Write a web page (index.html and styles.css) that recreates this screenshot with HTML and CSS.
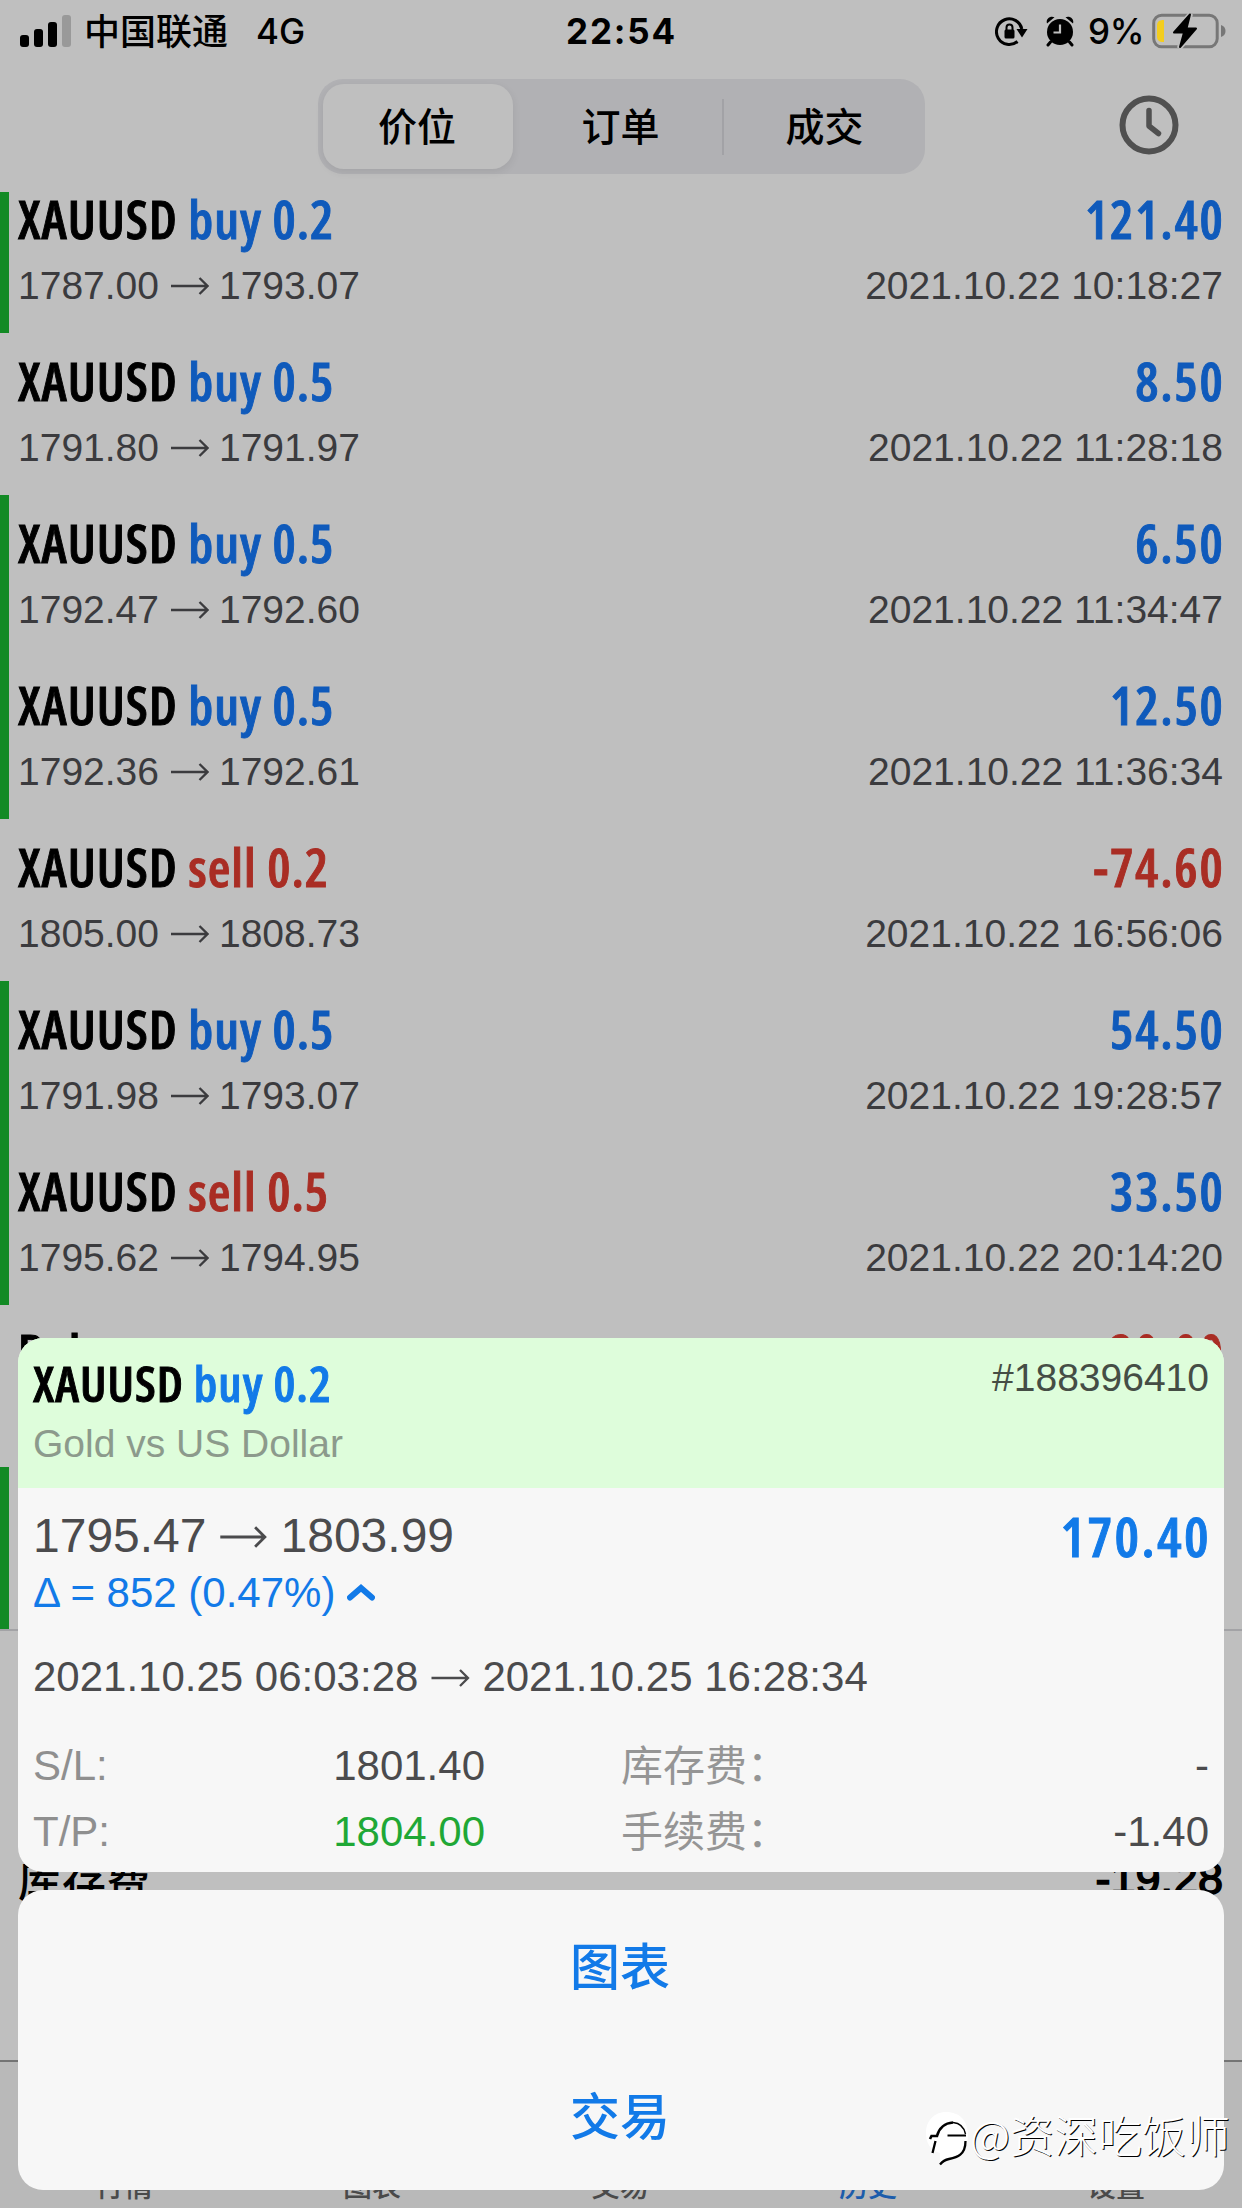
FILE: index.html
```html
<!DOCTYPE html>
<html lang="zh-CN">
<head>
<meta charset="utf-8">
<title>历史</title>
<link rel="stylesheet" href="styles.css">
</head>
<body>
<svg class="defs" width="0" height="0" aria-hidden="true">
  <symbol id="arrow" viewBox="0 0 38 18"><path d="M0 9H36.5M28.5 1L36.5 9L28.5 17" fill="none" stroke="currentColor" stroke-width="2.3"/></symbol>
</svg>
<div class="screen">
  <header class="status">
    <div class="status-left">
      <svg class="signal" width="51" height="32" viewBox="0 0 51 32"><rect x="0" y="20" width="9" height="12" rx="3"/><rect x="14" y="14" width="9" height="18" rx="3"/><rect x="28" y="7" width="9" height="25" rx="3"/><rect x="42" y="0" width="9" height="32" rx="3" fill="#999"/></svg>
      <span class="carrier">中国联通</span>
      <span class="network">4G</span>
    </div>
    <time class="clock">22:54</time>
    <div class="status-right">
      <svg class="lock" width="33" height="31" viewBox="0 0 33 31"><path d="M22.5 25.5A12.8 12.8 0 1 1 26.8 13" fill="none" stroke="#000" stroke-width="3"/><path d="M21.5 13H32.5L27 21.5Z"/><rect x="9.5" y="13.5" width="10" height="9" rx="1.5"/><path d="M11.5 14V11.5a3 3 0 0 1 6 0V14" fill="none" stroke="#000" stroke-width="2"/></svg>
      <svg class="alarm" width="28" height="31" viewBox="0 0 28 31"><circle cx="14" cy="16" r="13"/><path d="M1 7.5C-.5 3 4 -.8 8.5 1.2ZM27 7.5C28.5 3 24 -.8 19.5 1.2Z"/><path d="M4.5 26L2 29M23.5 26L26 29" stroke="#000" stroke-width="3" stroke-linecap="round"/><path d="M14 8.5V16.5H7.5" fill="none" stroke="#bfbfbf" stroke-width="2.2"/></svg>
      <span class="percent">9%</span>
      <svg class="battery" width="74" height="36" viewBox="0 0 74 36"><rect x="1.7" y="2.2" width="63.5" height="31.6" rx="8" fill="none" stroke="#777" stroke-width="3"/><path d="M69 12C75 13.5 75 22.5 69 24Z" fill="#777"/><path d="M12 7V29C6.5 29 5 27 5 23V13C5 9 6.5 7 12 7Z" fill="#f3cd1e"/><path d="M38.5 1L21.5 20H31L27.5 35L44.5 15H35Z" stroke="#bfbfbf" stroke-width="5" fill="none"/><path d="M38 1.5L22 19.5H32L28 34L44 15.5H34.5Z" stroke="#000" stroke-width="2" stroke-linejoin="round"/></svg>
    </div>
  </header>
  <nav class="toolbar">
    <div class="segmented">
      <span class="segment selected">价位</span>
      <span class="segment orders">订单</span>
      <i class="divider"></i>
      <span class="segment trades">成交</span>
    </div>
    <svg class="period" width="60" height="60" viewBox="0 0 60 60" fill="none" stroke="#505050" stroke-linecap="round" stroke-linejoin="round"><circle cx="30" cy="30" r="26.5" stroke-width="6"/><path d="M30 15.5V31L39.5 38.5" stroke-width="5.5"/></svg>
  </nav>
  <main class="history">
    <div class="deal closed-tp"><div class="line"><b class="name">XAUUSD <em class="buy">buy 0.2</em></b><b class="profit buy">121.40</b></div><div class="line sub"><span>1787.00<svg class="arrow"><use href="#arrow"/></svg>1793.07</span><span>2021.10.22 10:18:27</span></div></div>
    <div class="deal"><div class="line"><b class="name">XAUUSD <em class="buy">buy 0.5</em></b><b class="profit buy">8.50</b></div><div class="line sub"><span>1791.80<svg class="arrow"><use href="#arrow"/></svg>1791.97</span><span>2021.10.22 11:28:18</span></div></div>
    <div class="deal closed-tp"><div class="line"><b class="name">XAUUSD <em class="buy">buy 0.5</em></b><b class="profit buy">6.50</b></div><div class="line sub"><span>1792.47<svg class="arrow"><use href="#arrow"/></svg>1792.60</span><span>2021.10.22 11:34:47</span></div></div>
    <div class="deal closed-tp"><div class="line"><b class="name">XAUUSD <em class="buy">buy 0.5</em></b><b class="profit buy">12.50</b></div><div class="line sub"><span>1792.36<svg class="arrow"><use href="#arrow"/></svg>1792.61</span><span>2021.10.22 11:36:34</span></div></div>
    <div class="deal"><div class="line"><b class="name">XAUUSD <em class="sell">sell 0.2</em></b><b class="profit sell">-74.60</b></div><div class="line sub"><span>1805.00<svg class="arrow"><use href="#arrow"/></svg>1808.73</span><span>2021.10.22 16:56:06</span></div></div>
    <div class="deal closed-tp"><div class="line"><b class="name">XAUUSD <em class="buy">buy 0.5</em></b><b class="profit buy">54.50</b></div><div class="line sub"><span>1791.98<svg class="arrow"><use href="#arrow"/></svg>1793.07</span><span>2021.10.22 19:28:57</span></div></div>
    <div class="deal closed-tp"><div class="line"><b class="name">XAUUSD <em class="sell">sell 0.5</em></b><b class="profit buy">33.50</b></div><div class="line sub"><span>1795.62<svg class="arrow"><use href="#arrow"/></svg>1794.95</span><span>2021.10.22 20:14:20</span></div></div>
    <div class="deal"><div class="line"><b class="name">Balance</b><b class="profit sell">-20.00</b></div></div>
    <div class="deal closed-tp"></div>
    <div class="summary"><span>库存费</span><span>-19.28</span></div>
  </main>
  <footer class="tabs"><span>行情</span><span>图表</span><span>交易</span><span class="active">历史</span><span>设置</span></footer>
</div>

<div class="sheet">
  <section class="card">
    <div class="card-head">
      <div class="head-left"><b class="name">XAUUSD <em>buy 0.2</em></b><span class="desc">Gold vs US Dollar</span></div>
      <span class="ticket">#188396410</span>
    </div>
    <div class="card-body">
      <div class="line prices"><span>1795.47<svg class="arrow"><use href="#arrow"/></svg>1803.99</span><b>170.40</b></div>
      <div class="delta">Δ = 852 (0.47%)<svg width="28" height="17" viewBox="0 0 28 17"><path d="M3 13.5L14 4L25 13.5" fill="none" stroke="currentColor" stroke-width="6" stroke-linecap="round"/></svg></div>
      <div class="dates">2021.10.25 06:03:28<svg class="arrow"><use href="#arrow"/></svg>2021.10.25 16:28:34</div>
      <dl class="details">
        <dt>S/L:</dt><dd>1801.40</dd><dt class="cjk">库存费：</dt><dd>-</dd>
        <dt>T/P:</dt><dd class="hit">1804.00</dd><dt class="cjk">手续费：</dt><dd>-1.40</dd>
      </dl>
    </div>
  </section>
  <section class="card actions"><button>图表</button><button>交易</button></section>
</div>

<div class="watermark">
  <svg width="46" height="56" viewBox="0 0 46 56"><path d="M22 2C36 2 44 11 44 25C44 41 34 46 24 49L16 55V43C6 40 2 33 2 23C2 11 10 2 22 2Z" fill="#fff"/><path d="M6 29L7.5 26H13C15 18 21 13 29 12.500" fill="none" stroke="#000" stroke-width="2.6"/><path d="M29 12.500C35 13 40 17 41.500 24" fill="none" stroke="#000" stroke-width="1.4"/><path d="M23.500 25.500H42" fill="none" stroke="#000" stroke-width="2"/><path d="M11.5 31L8.5 43M41.500 31C41.5 45 33 47.500 25 49C20 50 18 52 16 54.500" fill="none" stroke="#000" stroke-width="2.3"/></svg>
  <span>@资深吃饭师</span>
</div>
</body>
</html>
```
FILE: styles.css
```css
* { box-sizing: border-box; }
body {
  position: relative;
  width: 1242px;
  height: 2208px;
  margin: 0;
  overflow: hidden;
  background: #bfbfbf;
  color: #000;
  font-family: "Liberation Sans", "Noto Sans CJK SC", sans-serif;
}
svg { display: block; flex: none; }
em { font-style: normal; }
.defs { position: absolute; }
.screen { display: flex; flex-direction: column; height: 2208px; }
.buy { color: #0f5abb; }
.sell { color: #a92d24; }

/* Status bar */
.status {
  display: grid;
  grid-template-columns: 1fr auto 1fr;
  align-items: center;
  height: 62px;
  padding: 0 16px 0 20px;
  font-family: "Inter", "Noto Sans CJK SC", sans-serif;
  font-size: 35px;
  line-height: 62px;
  font-weight: 500;
}
.status-left, .status-right { display: flex; align-items: center; }
.status-right { justify-content: flex-end; }
.carrier { margin-left: 13px; font: 500 36px/58px "Noto Sans CJK SC", sans-serif; padding-bottom: 4px; }
.network { margin-left: 28px; }
.clock { font-weight: 700; letter-spacing: 1.8px; margin-right: 3px; }
.alarm { margin: 0 14px 0 18px; }
.percent { letter-spacing: -.4px; }
.battery { margin-left: 8px; }

/* Toolbar */
.toolbar {
  display: flex;
  justify-content: flex-end;
  gap: 194px;
  height: 130px;
  padding: 17px 63px 0 0;
}
.period { margin-top: 16px; }
.segmented {
  display: flex;
  align-items: center;
  width: 607px;
  height: 95px;
  padding: 0 5px;
  border-radius: 25px;
  background: #b1b1b4;
  font: 500 39px/80px "Noto Sans CJK SC", sans-serif;
  text-align: center;
}
.segment { flex: 1; height: 85px; }
.segment.selected {
  flex: none;
  width: 190px;
  padding-right: 2px;
  border-radius: 21px;
  background: #bfbfbf;
  box-shadow: 0 3px 8px rgba(0, 0, 0, .08);
}
.segment.orders { flex: none; width: 209px; padding-left: 6px; }
.segment.trades { padding-left: 5px; }
.divider { width: 2px; height: 56px; background: #a2a2a6; }

/* Deals */
.history { height: 1868px; }
.deal { display: flow-root; height: 162px; padding: 18px 19px 0 9px; border-left: 9px solid transparent; }
.deal:first-child { height: 141px; padding-top: 0; }
.deal:first-child .line:first-child { margin-top: -3px; }
.closed-tp { border-left-color: #138a25; }
.line { display: flex; justify-content: space-between; }
.name, .profit, .prices b {
  font-family: "Open Sans", sans-serif;
  font-stretch: 75%;
  font-weight: 600;
  font-size: 52px;
  line-height: 60px;
  letter-spacing: 1px;
  -webkit-text-stroke: .9px currentColor;
  white-space: nowrap;
}
.profit { letter-spacing: 1.8px; margin-right: -1.5px; }
.sub { margin-top: 14px; font-size: 39px; line-height: 46px; color: #3b3b3e; }
.arrow { display: inline-block; width: 38px; height: 18px; margin: 0 10px 0 12px; vertical-align: 4px; }
.summary {
  display: flex;
  justify-content: space-between;
  height: 431px;
  padding: 218px 19px 0 18px;
  border-top: 2px solid #a3a3a6;
  font-size: 45px;
  line-height: 60px;
  -webkit-text-stroke: 1.6px currentColor;
}
.summary span:first-child { font: 500 44px/58px "Noto Sans CJK SC", sans-serif; -webkit-text-stroke: 0; }

/* Tab bar */
.tabs {
  display: grid;
  grid-template-columns: repeat(5, 1fr);
  height: 148px;
  padding: 102px 2px 0 0;
  border-top: 2px solid #747474;
  background: #b9b9b9;
  color: #4a4a4a;
  font: 500 29px/40px "Noto Sans CJK SC", sans-serif;
  text-align: center;
}
.tabs .active { color: #1c5cab; }

/* Deal sheet */
.sheet { position: absolute; left: 18px; right: 18px; top: 1338px; display: flex; flex-direction: column; gap: 18px; }
.card { height: 534px; border-radius: 25px; overflow: hidden; background: #f7f7f7; color: #4b4b4d; }
.card-head { display: flex; justify-content: space-between; height: 150px; padding: 16px 15px; background: #defddb; }
.head-left { display: flex; flex-direction: column; }
.card-head .name { color: #000; font-size: 49px; line-height: 58px; }
.card-head em, .prices b { color: #127ae8; }
.desc { margin-top: 9px; font-size: 39px; line-height: 46px; color: #8c9a8c; }
.ticket { font-size: 39px; line-height: 46px; margin-top: 1px; color: #454d45; }
.card-body { padding: 18px 15px 0; }
.prices { font-size: 48px; line-height: 60px; }
.prices .arrow { width: 47px; height: 22px; margin: 0 14px 0 13px; }
.prices b { font-size: 55px; letter-spacing: 2.4px; margin-right: -2px; }
.delta { display: flex; gap: 12px; font-size: 42px; line-height: 50px; color: #127ae8; margin-top: 2px; }
.delta svg { margin-top: 16px; }
.dates { margin-top: 34px; font-size: 42px; line-height: 50px; }
.dates .arrow { width: 41px; margin: 0 11px 0 12px; }
.details {
  display: grid;
  grid-template-columns: 200px 252px 300px 1fr;
  grid-auto-rows: 66px;
  margin: 31px 0 0;
  font-size: 42px;
  line-height: 66px;
}
.details dt { color: #8f8f8f; }
.details dd { margin: 0; text-align: right; }
.details .cjk { padding-left: 136px; margin-right: -100px; color: #959595; font: 400 42px/60px "Noto Sans CJK SC", sans-serif; white-space: nowrap; }
.details .hit { color: #1fa836; }
.actions { display: grid; grid-template-rows: 1fr 1fr; height: 300px; }
.actions button { border: 0; padding: 0 2px 4px 0; background: none; color: #127ae8; font: 500 50px/146px "Noto Sans CJK SC", sans-serif; }

/* Author mark laid over the lower corner */
.watermark {
  position: absolute;
  left: 924px;
  top: 2110px;
  display: flex;
  color: #fff;
  font: 300 44px/49px "Noto Sans CJK SC", sans-serif;
  text-shadow: 1px 1px 0 #000;
  white-space: nowrap;
}
```
